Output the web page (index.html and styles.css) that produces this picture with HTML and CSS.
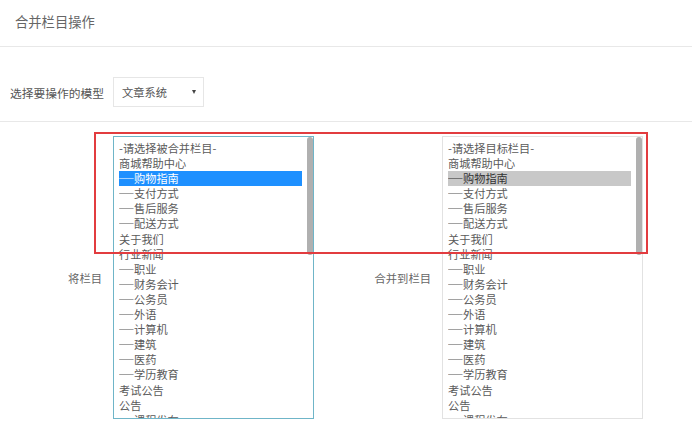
FILE: index.html
```html
<!DOCTYPE html>
<html lang="zh-CN">
<head>
    <meta charset="UTF-8">
    <meta name="viewport" content="width=device-width, initial-scale=1.0">
    <title>合并栏目操作</title>

    <link rel="stylesheet" href="styles.css">
</head>
<body>

<div class="page-head">合并栏目操作</div>

<div class="model-row">
    <label class="model-label">选择要操作的模型</label>
    <span class="model-select">文章系统</span>
</div>

<div class="merge-row">
    <div class="merge-group">
        <div class="merge-label">将栏目</div>
        <div class="cat-list focused">
            <div class="cat-items">
                <div class="cat">-请选择被合并栏目-</div>
                <div class="cat">商城帮助中心</div>
                <div class="cat selected"><span class="dash">─</span>购物指南</div>
                <div class="cat"><span class="dash">─</span>支付方式</div>
                <div class="cat"><span class="dash">─</span>售后服务</div>
                <div class="cat"><span class="dash">─</span>配送方式</div>
                <div class="cat">关于我们</div>
                <div class="cat">行业新闻</div>
                <div class="cat"><span class="dash">─</span>职业</div>
                <div class="cat"><span class="dash">─</span>财务会计</div>
                <div class="cat"><span class="dash">─</span>公务员</div>
                <div class="cat"><span class="dash">─</span>外语</div>
                <div class="cat"><span class="dash">─</span>计算机</div>
                <div class="cat"><span class="dash">─</span>建筑</div>
                <div class="cat"><span class="dash">─</span>医药</div>
                <div class="cat"><span class="dash">─</span>学历教育</div>
                <div class="cat">考试公告</div>
                <div class="cat">公告</div>
                <div class="cat"><span class="dash">─</span>课程发布</div>
            </div>
            <div class="scroll-bar"><div class="scroll-thumb"></div></div>
        </div>
    </div>

    <div class="merge-group">
        <div class="merge-label">合并到栏目</div>
        <div class="cat-list">
            <div class="cat-items">
                <div class="cat">-请选择目标栏目-</div>
                <div class="cat">商城帮助中心</div>
                <div class="cat selected"><span class="dash">─</span>购物指南</div>
                <div class="cat"><span class="dash">─</span>支付方式</div>
                <div class="cat"><span class="dash">─</span>售后服务</div>
                <div class="cat"><span class="dash">─</span>配送方式</div>
                <div class="cat">关于我们</div>
                <div class="cat">行业新闻</div>
                <div class="cat"><span class="dash">─</span>职业</div>
                <div class="cat"><span class="dash">─</span>财务会计</div>
                <div class="cat"><span class="dash">─</span>公务员</div>
                <div class="cat"><span class="dash">─</span>外语</div>
                <div class="cat"><span class="dash">─</span>计算机</div>
                <div class="cat"><span class="dash">─</span>建筑</div>
                <div class="cat"><span class="dash">─</span>医药</div>
                <div class="cat"><span class="dash">─</span>学历教育</div>
                <div class="cat">考试公告</div>
                <div class="cat">公告</div>
                <div class="cat"><span class="dash">─</span>课程发布</div>
            </div>
            <div class="scroll-bar"><div class="scroll-thumb"></div></div>
        </div>
    </div>

    <div class="mark"></div>
</div>

</body>
</html>
```

FILE: styles.css
```css
*{
    padding: 0;
    margin: 0;
    box-sizing: border-box;
}

body{
    background-color: #fff;
    font-family: "Noto Sans CJK SC", "Liberation Sans", sans-serif;
    color: #555;
    width: 692px;
    height: 441px;
    overflow: hidden;
}

.page-head
{
    height: 47px;
    line-height: 44px;
    padding-left: 15px;
    font-size: 13.3px;
    color: #666;
    border-bottom: 1px solid #e8e8e8;
}

.model-row
{
    display: flex;
    align-items: center;
    padding: 30px 0 14px 10px;
    border-bottom: 1px solid #e8e8e8;
}

.model-label
{
    font-size: 11.75px;
    width: 103px;
    color: #555;
}

.model-select
{
    position: relative;
    display: block;
    width: 91px;
    height: 30px;
    line-height: 28px;
    padding-left: 8px;
    font-size: 11.25px;
    color: #555;
    border: 1px solid #e6e6e6;
}

.model-select::after
{
    content: "";
    position: absolute;
    right: 7px;
    top: 12px;
    border-left: 2.5px solid transparent;
    border-right: 2.5px solid transparent;
    border-top: 4px solid #444;
}

.merge-row
{
    position: relative;
    display: flex;
    gap: 15px;
    padding-top: 14px;
}

.merge-group
{
    display: flex;
    align-items: center;
}

.merge-label
{
    width: 113px;
    padding-right: 11px;
    text-align: right;
    font-size: 11.3px;
    color: #666;
}

.cat-list
{
    display: flex;
    width: 201px;
    height: 283px;
    border: 1px solid #e2e2e2;
}

.cat-list.focused
{
    border-color: #6fb5c8;
}

.cat-items
{
    flex: 1;
    overflow: hidden;
    padding: 4px 5px;
    font-size: 11.2px;
    line-height: 15.1px;
    color: #5a5a5a;
}

.scroll-bar
{
    width: 6px;
}

.scroll-thumb
{
    height: 118px;
    background-color: #b0b0b0;
    border-radius: 3px;
}

.cat
{
    height: 15.1px;
    white-space: nowrap;
}

.cat.selected
{
    background-color: #c8c8c8;
    color: #333;
}

.focused .cat.selected
{
    background-color: #1e90ff;
    color: #fff;
}

.dash
{
    display: inline-block;
    width: 15px;
    vertical-align: top;
    transform: scaleX(1.3);
    transform-origin: left;
}

/* red annotation box */
.mark
{
    position: absolute;
    left: 94px;
    top: 10px;
    width: 554px;
    height: 122px;
    border: 2px solid #e23c3f;
}
```
